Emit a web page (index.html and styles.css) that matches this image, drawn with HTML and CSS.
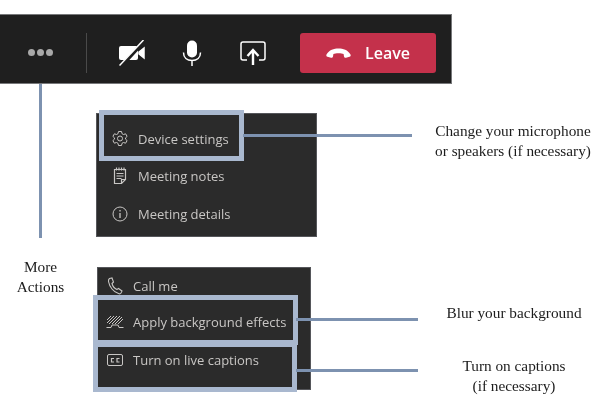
FILE: index.html
```html
<!DOCTYPE html>
<html lang="en">
<head>
  <meta charset="UTF-8">
  <title>Meeting controls</title>
  <link rel="stylesheet" href="styles.css">
</head>
<body>
  <div class="canvas">

    <!-- call toolbar -->
    <div class="toolbar">
      <div class="more"><span class="dot"></span><span class="dot"></span><span class="dot"></span></div>
      <div class="sep"></div>
      <div class="tool tool-video">
        <svg width="26" height="26" viewBox="0 0 26 26">
          <path d="M2 6h15a2 2 0 0 1 2 2v10a2 2 0 0 1-2 2H2a2 2 0 0 1-2-2V8a2 2 0 0 1 2-2z" fill="#fff"/>
          <path d="M20 12l5-4v10l-5-4z" fill="#fff" stroke="#fff" stroke-width="1.500"/>
          <path d="M2 26.500L25 1.500" stroke="#1f1f1f" stroke-width="3.500"/>
          <path d="M0.500 25.500L24.500 0" stroke="#fff" stroke-width="1.500"/>
        </svg>
      </div>
      <div class="tool tool-mic">
        <svg width="20" height="26" viewBox="0 0 20 26">
          <rect x="5" y="0.500" width="10" height="17" rx="5" fill="#fff"/>
          <path d="M1.500 12.500c0 5 3.500 8 8.500 8s8.500-3 8.500-8M10 20.500V26" fill="none" stroke="#fff" stroke-width="1.500"/>
        </svg>
      </div>
      <div class="tool tool-share">
        <svg width="26" height="24" viewBox="0 0 26 24">
          <path d="M7 19H3a2 2 0 0 1-2-2V3a2 2 0 0 1 2-2h20a2 2 0 0 1 2 2v14a2 2 0 0 1-2 2h-4" fill="none" stroke="#fff" stroke-width="1.500"/>
          <path d="M13 24V10M7.500 15L13 9l5.500 6" fill="none" stroke="#fff" stroke-width="2.400"/>
        </svg>
      </div>
      <div class="leave">
        <svg width="25" height="10" viewBox="0 0 25 10">
          <path d="M0.500 6.500C3 2 8 0.500 12.500 0.500S22 2 24.500 6.500c0.500 1 0 2-1 2.300l-3.500 0.900c-1 0.200-1.800-0.300-2-1.200l-0.400-2.500C15.500 5 9.500 5 7.400 6l-0.400 2.500c-0.200 0.900-1 1.400-2 1.200l-3.500-0.900c-1-0.300-1.500-1.300-1-2.300z" fill="#fff"/>
        </svg>
        <span>Leave</span>
      </div>
    </div>

    <!-- top menu -->
    <div class="menu menu-top">
      <div class="menu-row">
        <svg width="18" height="18" viewBox="0 0 18 18" fill="none" stroke="#c8c6c4" stroke-width="1">
          <path d="M7.500 1.500h3l.5 2.200 1.500.8 2.100-.7 1.500 2.600-1.600 1.500v1.200l1.600 1.500-1.500 2.600-2.100-.7-1.500.8-.5 2.200h-3l-.5-2.200-1.500-.8-2.100.7-1.500-2.600 1.600-1.500V7.900L1.900 6.400l1.500-2.600 2.100.7L7 3.700z"/>
          <circle cx="9" cy="8.500" r="2.500"/>
        </svg>
        <span>Device settings</span>
      </div>
      <div class="menu-row">
        <svg width="18" height="18" viewBox="0 0 18 18" fill="none" stroke="#c8c6c4" stroke-width="1.200">
          <path d="M3.500 2.500h11v10l-4 4h-7z"/>
          <path d="M5.500 0.500v3M8 0.500v3M10.500 0.500v3M13 0.500v3M5.500 6.500h7M5.500 9h7M5.500 11.500h5M10.500 16.500v-4h4"/>
        </svg>
        <span>Meeting notes</span>
      </div>
      <div class="menu-row">
        <svg width="18" height="18" viewBox="0 0 18 18" fill="none" stroke="#c8c6c4" stroke-width="1">
          <circle cx="9" cy="9" r="7"/>
          <path d="M9 8v5M9 5v1.500" stroke-width="1.300"/>
        </svg>
        <span>Meeting details</span>
      </div>
    </div>

    <!-- bottom menu -->
    <div class="menu menu-bottom">
      <div class="menu-row">
        <svg width="18" height="18" viewBox="0 0 18 18" fill="none" stroke="#c8c6c4" stroke-width="1.100">
          <path d="M3.500 1.500L6 1l1.500 4-1.500 1.500c.5 2 2.500 5 5 6l1.500-1 3.500 2.500-1 2c-.5.800-1.500 1-2.500.6C7.500 15 3.500 10 2.500 4.500c-.1-1.300.200-2.500 1-3z"/>
        </svg>
        <span>Call me</span>
      </div>
      <div class="menu-row">
        <svg width="18" height="18" viewBox="0 0 18 18" fill="none" stroke="#c8c6c4" stroke-width="1">
          <path d="M1 7l4-4M1 10l7-7M3 11l8-8M6 11l8-8M9 11l7-7M12 11l5-5M0.500 14.500h4.500l1-2.500h6l1 2.500h4.500"/>
        </svg>
        <span>Apply background effects</span>
      </div>
      <div class="menu-row">
        <svg width="18" height="18" viewBox="0 0 18 18" fill="none" stroke="#c8c6c4" stroke-width="1">
          <rect x="1.500" y="3.500" width="15" height="11" rx="1.500"/>
          <path d="M8 7.500H5.500v3.500H8M13.500 7.500H11v3.500h2.500" stroke-width="1.200"/>
        </svg>
        <span>Turn on live captions</span>
      </div>
    </div>

    <!-- highlight boxes over the menus -->
    <div class="mark mark-device"></div>
    <div class="mark mark-effects"></div>
    <div class="mark mark-captions"></div>

    <!-- connector lines -->
    <div class="line line-more"></div>
    <div class="line line-device"></div>
    <div class="line line-effects"></div>
    <div class="line line-captions"></div>

    <!-- notes -->
    <p class="note note-more">More<br>Actions</p>
    <p class="note note-device">Change your microphone<br>or speakers (if necessary)</p>
    <p class="note note-effects">Blur your background</p>
    <p class="note note-captions">Turn on captions<br>(if necessary)</p>
  </div>
</body>
</html>
```

FILE: styles.css
```css
html, body {
  margin: 0;
  padding: 0;
  background: #fff;
}
.canvas {
  position: relative;
  width: 600px;
  height: 407px;
  overflow: hidden;
}

/* toolbar */
.toolbar {
  position: absolute;
  left: 0;
  top: 14px;
  width: 452px;
  height: 70px;
  box-sizing: border-box;
  padding-top: 7px;
  border: 1px solid #77787a;
  border-left: none;
  background: #1f1f1f;
  display: flex;
  align-items: center;
  filter: blur(0.4px);
}
.more {
  width: 80px;
  margin-right: 6px;
  display: flex;
  justify-content: center;
  gap: 2px;
}
.dot {
  width: 7px;
  height: 7px;
  border-radius: 50%;
  background: #a9a9a9;
}
.sep {
  width: 1px;
  height: 40px;
  background: #4a4a4a;
}
.tool {
  display: flex;
}
.tool-video {
  margin-left: 32px;
}
.tool-mic {
  margin-left: 37px;
}
.tool-share {
  margin-left: 38px;
}
.leave {
  margin-left: 34px;
  width: 136px;
  height: 40px;
  border-radius: 3px;
  background: #c4314b;
  color: #fff;
  font: 600 16px "Open Sans", sans-serif;
  display: flex;
  align-items: center;
  justify-content: center;
  gap: 14px;
}

/* menus */
.menu {
  position: absolute;
  box-sizing: border-box;
  background: #2b2b2b;
  border: 1px solid #55565a;
  display: flex;
  flex-direction: column;
  color: #c8c6c4;
  font: 13px "Open Sans", sans-serif;
  filter: blur(0.4px);
}
.menu-top {
  left: 96px;
  top: 113px;
  width: 221px;
  height: 124px;
  padding: 6px 0 0 14px;
}
.menu-bottom {
  left: 97px;
  top: 267px;
  width: 214px;
  height: 123px;
  padding: 0 0 0 8px;
}
.menu-row {
  height: 37.500px;
  display: flex;
  align-items: center;
  gap: 9px;
}
.menu-bottom .menu-row {
  height: 38px;
}
.menu-bottom .menu-row:first-child {
  height: 35px;
}

/* annotations */
.mark {
  position: absolute;
  box-sizing: border-box;
  border: 5px solid #a9b8cf;
  filter: blur(0.3px);
}
.mark-device {
  left: 99px;
  top: 110px;
  width: 145px;
  height: 51px;
}
.mark-effects {
  left: 93px;
  top: 295px;
  width: 205px;
  height: 50px;
}
.mark-captions {
  left: 93px;
  top: 344px;
  width: 204px;
  height: 48px;
  border-top-width: 3px;
}
.line {
  position: absolute;
  background: #7d92b0;
}
.line-more {
  left: 39px;
  top: 84px;
  width: 3px;
  height: 154px;
}
.line-device {
  left: 243px;
  top: 134px;
  width: 169px;
  height: 3px;
}
.line-effects {
  left: 296px;
  top: 318px;
  width: 122px;
  height: 3px;
}
.line-captions {
  left: 296px;
  top: 369px;
  width: 122px;
  height: 3px;
}
.note {
  position: absolute;
  margin: 0;
  text-align: center;
  color: #1c1c1c;
  font: 15.300px/20px "Liberation Serif", serif;
  filter: blur(0.3px);
}
.note-more {
  left: 0;
  top: 257px;
  width: 81px;
}
.note-device {
  left: 413px;
  top: 121px;
  width: 200px;
}
.note-effects {
  left: 414px;
  top: 303px;
  width: 200px;
}
.note-captions {
  left: 414px;
  top: 356px;
  width: 200px;
}
```
